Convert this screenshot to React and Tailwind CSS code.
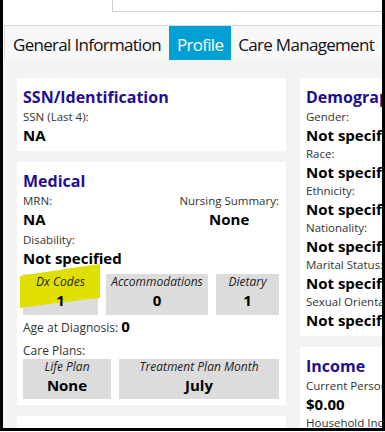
import React from 'react';

const font = { fontFamily: '"Open Sans", "Noto Sans", sans-serif' };

function Label({ children, className = '' }) {
    return <div className={`text-[11.5px] leading-[17px] text-[#333] ${className}`}>{children}</div>;
}

function Value({ children, className = '' }) {
    return <div className={`text-[15px] leading-[20px] font-bold text-black ${className}`}>{children}</div>;
}

function Heading({ children }) {
    return <h2 className="text-[16px] leading-[22px] font-bold text-[#1f0f8f] whitespace-nowrap">{children}</h2>;
}

function Card({ children, className = '' }) {
    return <div className={`bg-white px-[6px] pt-2 pb-[6px] ${className}`}>{children}</div>;
}

function StatBox({ label, value, className = '', highlight = false }) {
    return (
        <div className={`relative bg-[#dcdcdc] h-[41px] text-center ${className}`}>
            {highlight && (
                <svg className="absolute -left-[4px] -top-[11px]" width="84" height="46" viewBox="0 0 84 46">
                    <path d="M1 13 C20 10 45 6 81 1 L81 35 C60 37 30 41 1 45 Z" fill="#e0e000" />
                </svg>
            )}
            <div className="relative text-[12px] leading-[16px] italic text-[#222]">{label}</div>
            <div className="relative text-[15px] leading-[20px] font-bold text-black">{value}</div>
        </div>
    );
}

function PlanBox({ label, value, className = '' }) {
    return (
        <div className={`bg-[#dcdcdc] h-[40px] text-center ${className}`}>
            <div className="text-[12px] leading-[16px] italic text-[#222]">{label}</div>
            <div className="text-[15px] leading-[20px] font-bold text-black">{value}</div>
        </div>
    );
}

export default function App() {
    const demo = ['Gender:', 'Race:', 'Ethnicity:', 'Nationality:', 'Marital Status:', 'Sexual Orientation:'];
    return (
        <div style={font} className="w-[385px] h-[432px] overflow-hidden bg-white">
            <div className="h-[431px] border-l-[3px] border-r-[3px] border-b-[3px] border-black flex flex-col overflow-hidden">
                <div className="h-[25px] bg-white">
                    <div className="ml-[109px] h-[12px] border-l border-b border-[#cfcfcf] bg-white" />
                </div>
                <div className="ml-[1px] h-[35px] border-t border-l border-[#dcdcdc] bg-[#f8f8f8] flex text-[17px] tracking-[-0.7px] leading-[34px] pt-[2px] text-[#111] whitespace-nowrap">
                    <div className="px-[8px]">General Information</div>
                    <div className="px-[8px] -mt-[2px] pt-[2px] bg-[#00a0d6] text-white">Profile</div>
                    <div className="px-[7px]">Care Management</div>
                </div>
                <div className="flex-1 bg-[#f3f3f3] pl-[14px] pt-[18px] flex gap-[14px] overflow-hidden">
                    <div className="w-[269px] shrink-0 flex flex-col gap-[11px]">
                        <Card>
                            <Heading>SSN/Identification</Heading>
                            <Label>SSN (Last 4):</Label>
                            <Value>NA</Value>
                        </Card>
                        <Card className="pr-[7px]">
                            <Heading>Medical</Heading>
                            <div className="flex justify-between">
                                <div>
                                    <Label>MRN:</Label>
                                    <Value>NA</Value>
                                </div>
                                <div className="text-center">
                                    <Label>Nursing Summary:</Label>
                                    <Value>None</Value>
                                </div>
                            </div>
                            <Label className="mt-[2px]">Disability:</Label>
                            <Value>Not specified</Value>
                            <div className="flex gap-2 mt-[6px]">
                                <StatBox label="Dx Codes" value="1" className="w-[75px]" highlight />
                                <StatBox label="Accommodations" value="0" className="w-[102px]" />
                                <StatBox label="Dietary" value="1" className="w-[63px]" />
                            </div>
                            <div className="mt-[3px] text-[12px] leading-[17px] text-[#333]">
                                Age at Diagnosis: <span className="text-[15px] font-bold text-black">0</span>
                            </div>
                            <Label className="mt-[6px] text-[12px]">Care Plans:</Label>
                            <div className="flex gap-2">
                                <PlanBox label="Life Plan" value="None" className="w-[88px]" />
                                <PlanBox label="Treatment Plan Month" value="July" className="w-[160px]" />
                            </div>
                        </Card>
                        <Card>
                            <Heading>Substance Abuse</Heading>
                        </Card>
                    </div>
                    <div className="w-[269px] shrink-0 flex flex-col gap-[11px]">
                        <Card className="pb-[4px]">
                            <Heading>Demographics</Heading>
                            {demo.map((d) => (
                                <div key={d}>
                                    <Label>{d}</Label>
                                    <Value>Not specified</Value>
                                </div>
                            ))}
                        </Card>
                        <Card>
                            <Heading>Income</Heading>
                            <Label>Current Personal Income:</Label>
                            <Value>$0.00</Value>
                            <Label>Household Income:</Label>
                        </Card>
                    </div>
                </div>
            </div>
        </div>
    );
}
